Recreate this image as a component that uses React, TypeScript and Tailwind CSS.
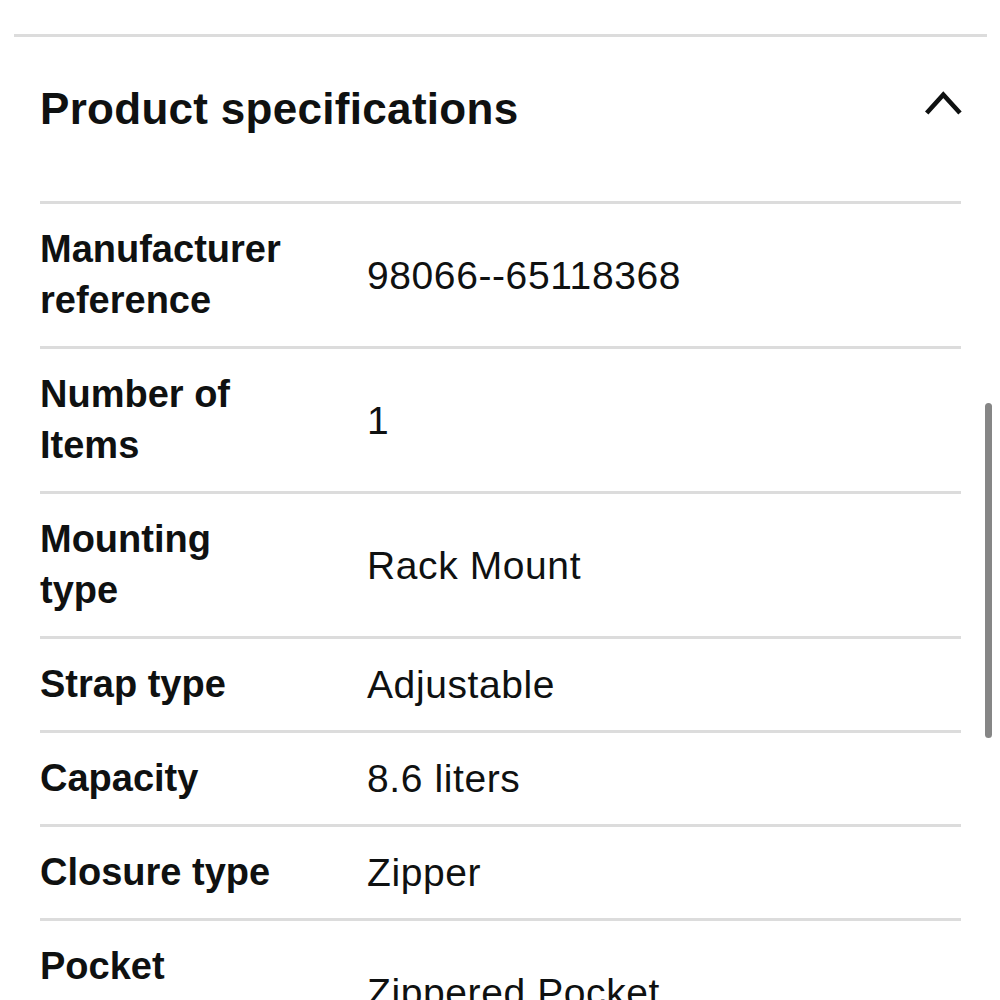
import React from "react";

const rows: { label: string; value: string }[] = [
  { label: "Manufacturer reference", value: "98066--65118368" },
  { label: "Number of Items", value: "1" },
  { label: "Mounting type", value: "Rack Mount" },
  { label: "Strap type", value: "Adjustable" },
  { label: "Capacity", value: "8.6 liters" },
  { label: "Closure type", value: "Zipper" },
  { label: "Pocket description", value: "Zippered Pocket" },
];

export default function App() {
  return (
    <div
      className="relative w-[1000px] h-[1000px] overflow-hidden bg-white text-[#0f1111]"
      style={{ fontFamily: '"Liberation Sans", Arial, sans-serif' }}
    >
      <div className="pt-[34px] pl-[14px] pr-[13px]">
        <div className="h-[3px] bg-[#dcdcdc]" />
      </div>
      <div className="pl-[40px] pr-[39px]">
        <div className="flex items-start justify-between pt-[46px] pb-[66px]">
          <h2 className="text-[44px] leading-[52px] font-bold tracking-[0.3px]">
            Product specifications
          </h2>
          <svg
            width="44"
            height="28"
            viewBox="0 0 44 28"
            className="mt-[7px] mr-[-2px] overflow-visible"
          >
            <path
              d="M7.7 23 L24.3 4.7 L41 23"
              fill="none"
              stroke="#0f1111"
              strokeWidth="4.6"
              strokeLinejoin="miter"
            />
          </svg>
        </div>
        <div>
          {rows.map((r) => (
            <div
              key={r.label}
              className="flex items-center border-t-[3px] border-[#dcdcdc] pt-[20px] pb-[20px]"
            >
              <div className="w-[327px] shrink-0 pr-[75px] text-[38px] leading-[51px] font-bold">
                {r.label}
              </div>
              <div className="text-[39px] leading-[51px] tracking-[0.6px]">{r.value}</div>
            </div>
          ))}
        </div>
      </div>
      <div className="absolute left-[985px] top-[403px] w-[7px] h-[335px] rounded-full bg-[#868686]" />
    </div>
  );
}
